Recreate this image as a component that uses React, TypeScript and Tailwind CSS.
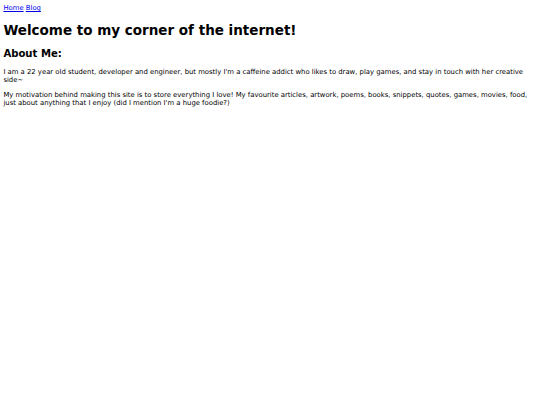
export default function App() {
  return (
    <div className="min-h-screen bg-white px-[3.4px] pt-[4.4px] text-[6.85px] leading-[normal] text-black [font-family:'DejaVu_Sans',Verdana,sans-serif]">
      <nav>
        <a href="#" className="text-[#0000ee] underline">Home</a>{' '}
        <a href="#" className="text-[#0000ee] underline">Blog</a>
      </nav>
      <h1 className="mt-[10px] mb-[10px] text-[13.5px] font-bold">Welcome to my corner of the internet!</h1>
      <h2 className="mt-[10px] mb-[8.4px] text-[10.1px] font-bold">About Me:</h2>
      <p className="my-[7.7px]">
        I am a 22 year old student, developer and engineer, but mostly I'm a caffeine addict who likes to draw, play games, and stay in touch with her creative side~
      </p>
      <p className="my-[7.7px]">
        My motivation behind making this site is to store everything I love! My favourite articles, artwork, poems, books, snippets, quotes, games, movies, food, just about anything that I enjoy (did I mention I'm a huge foodie?)
      </p>
    </div>
  );
}
